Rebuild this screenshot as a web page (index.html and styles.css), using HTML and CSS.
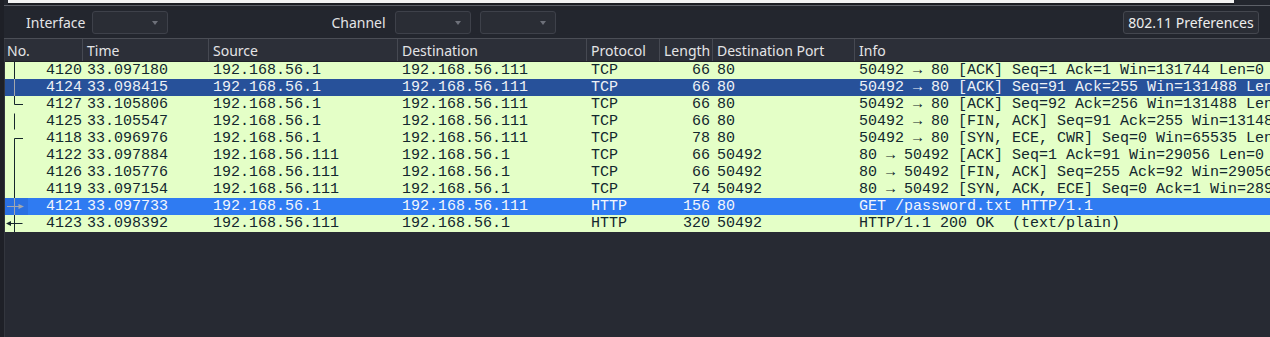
FILE: index.html
```html
<!DOCTYPE html>
<html lang="en">
<head>
    <meta charset="UTF-8">
    <title>Packet List</title>
    <link rel="stylesheet" href="styles.css">
</head>
<body>
    <div class="filter-edge"></div>

    <div class="toolbar">
        <span class="tool-label">Interface</span>
        <div class="combo"><span class="caret"></span></div>
        <span class="tool-label channel">Channel</span>
        <div class="combo"><span class="caret"></span></div>
        <div class="combo second"><span class="caret"></span></div>
        <button class="pref-btn">802.11 Preferences</button>
    </div>

    <div class="packet-list">
        <div class="cols header">
            <div class="hcell first">No.</div>
            <div class="hcell">Time</div>
            <div class="hcell">Source</div>
            <div class="hcell">Destination</div>
            <div class="hcell">Protocol</div>
            <div class="hcell">Length</div>
            <div class="hcell">Destination Port</div>
            <div class="hcell last">Info</div>
        </div>

        <div class="cols row">
            <div class="cell no"><svg class="rel" viewBox="0 0 23 17"><path d="M9.5 0V17"/></svg><span>4120</span></div>
            <div class="cell">33.097180</div>
            <div class="cell">192.168.56.1</div>
            <div class="cell">192.168.56.111</div>
            <div class="cell">TCP</div>
            <div class="cell num">66</div>
            <div class="cell">80</div>
            <div class="cell info">50492 → 80 [ACK] Seq=1 Ack=1 Win=131744 Len=0</div>
        </div>
        <div class="cols row selected">
            <div class="cell no"><svg class="rel" viewBox="0 0 23 17"><path d="M9.5 0V17"/></svg><span>4124</span></div>
            <div class="cell">33.098415</div>
            <div class="cell">192.168.56.1</div>
            <div class="cell">192.168.56.111</div>
            <div class="cell">TCP</div>
            <div class="cell num">66</div>
            <div class="cell">80</div>
            <div class="cell info">50492 → 80 [ACK] Seq=91 Ack=255 Win=131488 Len=0</div>
        </div>
        <div class="cols row">
            <div class="cell no"><svg class="rel" viewBox="0 0 23 17"><path d="M9.5 0V8.5H18"/></svg><span>4127</span></div>
            <div class="cell">33.105806</div>
            <div class="cell">192.168.56.1</div>
            <div class="cell">192.168.56.111</div>
            <div class="cell">TCP</div>
            <div class="cell num">66</div>
            <div class="cell">80</div>
            <div class="cell info">50492 → 80 [ACK] Seq=92 Ack=256 Win=131488 Len=0</div>
        </div>
        <div class="cols row">
            <div class="cell no"><svg class="rel" viewBox="0 0 23 17"><path d="M9.5 0.5V16.5"/></svg><span>4125</span></div>
            <div class="cell">33.105547</div>
            <div class="cell">192.168.56.1</div>
            <div class="cell">192.168.56.111</div>
            <div class="cell">TCP</div>
            <div class="cell num">66</div>
            <div class="cell">80</div>
            <div class="cell info">50492 → 80 [FIN, ACK] Seq=91 Ack=255 Win=131488 Len=0</div>
        </div>
        <div class="cols row">
            <div class="cell no"><svg class="rel" viewBox="0 0 23 17"><path d="M18 8.5H9.5V17"/></svg><span>4118</span></div>
            <div class="cell">33.096976</div>
            <div class="cell">192.168.56.1</div>
            <div class="cell">192.168.56.111</div>
            <div class="cell">TCP</div>
            <div class="cell num">78</div>
            <div class="cell">80</div>
            <div class="cell info">50492 → 80 [SYN, ECE, CWR] Seq=0 Win=65535 Len=0 MSS=1460</div>
        </div>
        <div class="cols row">
            <div class="cell no"><svg class="rel" viewBox="0 0 23 17"><path d="M9.5 0V17"/></svg><span>4122</span></div>
            <div class="cell">33.097884</div>
            <div class="cell">192.168.56.111</div>
            <div class="cell">192.168.56.1</div>
            <div class="cell">TCP</div>
            <div class="cell num">66</div>
            <div class="cell">50492</div>
            <div class="cell info">80 → 50492 [ACK] Seq=1 Ack=91 Win=29056 Len=0</div>
        </div>
        <div class="cols row">
            <div class="cell no"><svg class="rel" viewBox="0 0 23 17"><path d="M9.5 0V17"/></svg><span>4126</span></div>
            <div class="cell">33.105776</div>
            <div class="cell">192.168.56.111</div>
            <div class="cell">192.168.56.1</div>
            <div class="cell">TCP</div>
            <div class="cell num">66</div>
            <div class="cell">50492</div>
            <div class="cell info">80 → 50492 [FIN, ACK] Seq=255 Ack=92 Win=29056 Len=0</div>
        </div>
        <div class="cols row">
            <div class="cell no"><svg class="rel" viewBox="0 0 23 17"><path d="M9.5 0V17"/></svg><span>4119</span></div>
            <div class="cell">33.097154</div>
            <div class="cell">192.168.56.111</div>
            <div class="cell">192.168.56.1</div>
            <div class="cell">TCP</div>
            <div class="cell num">74</div>
            <div class="cell">50492</div>
            <div class="cell info">80 → 50492 [SYN, ACK, ECE] Seq=0 Ack=1 Win=28960 Len=0</div>
        </div>
        <div class="cols row current">
            <div class="cell no"><svg class="rel" viewBox="0 0 23 17"><path d="M9.5 0V17M2 8.5H14"/><path class="head" d="M19 8.5L13.5 6V11Z"/></svg><span>4121</span></div>
            <div class="cell">33.097733</div>
            <div class="cell">192.168.56.1</div>
            <div class="cell">192.168.56.111</div>
            <div class="cell">HTTP</div>
            <div class="cell num">156</div>
            <div class="cell">80</div>
            <div class="cell info">GET /password.txt HTTP/1.1</div>
        </div>
        <div class="cols row">
            <div class="cell no"><svg class="rel" viewBox="0 0 23 17"><path d="M9.5 0V17M5 8.5H17.5"/><path class="head" d="M1 8.5L6 6V11Z"/></svg><span>4123</span></div>
            <div class="cell">33.098392</div>
            <div class="cell">192.168.56.111</div>
            <div class="cell">192.168.56.1</div>
            <div class="cell">HTTP</div>
            <div class="cell num">320</div>
            <div class="cell">50492</div>
            <div class="cell info">HTTP/1.1 200 OK  (text/plain)</div>
        </div>
    </div>
</body>
</html>
```

FILE: styles.css
```css
/* Dark Qt-style window around a Wireshark packet list */
body {
    margin: 0;
    height: 337px;
    overflow: hidden;
    background: #23262e;
    font-family: 'Noto Sans', sans-serif;
    font-size: 14px;
    color: #e4e4e6;
    border-left: 4px solid #1e2027;
}

.filter-edge {
    margin-left: 4px;
    width: 1226px;
    height: 3px;
    background: #f3f3f3;
    border-bottom: 2px solid #1b1d23;
}

.toolbar {
    display: flex;
    align-items: center;
    height: 32px;
    margin-left: -4px;
    padding-left: 26px;
    padding-right: 11px;
    border-top: 1px solid #5d6068;
    border-bottom: 1px solid #4b4e56;
}

.tool-label {
    margin-right: 7px;
}

.tool-label.channel {
    margin-left: 163px;
    margin-right: 9px;
}

.combo {
    position: relative;
    width: 74px;
    height: 21px;
    background: #2a2d35;
    border: 1px solid #3e414a;
    border-radius: 3px;
}

.combo.second {
    margin-left: 9px;
}

.caret {
    position: absolute;
    right: 9px;
    top: 9px;
    border-left: 3.5px solid transparent;
    border-right: 3.5px solid transparent;
    border-top: 4px solid #6e717a;
}

.pref-btn {
    margin-left: auto;
    height: 23px;
    width: 136px;
    padding: 0;
    background: #2a2d35;
    border: 1px solid #44474f;
    border-radius: 3px;
    color: #eeeeee;
    font-family: 'Noto Sans', sans-serif;
    font-size: 14px;
}

.packet-list {
    background: #272a33;
    height: 300px;
    border-left: 1px solid #33363e;
}

.cols {
    display: grid;
    grid-template-columns: 78px 126px 189px 189px 73px 53px 142px 1fr;
}

.header {
    height: 22px;
    background: #2c2f38;
    border-bottom: 1px solid #1f2128;
}

.hcell {
    padding-left: 4px;
    padding-top: 1px;
    line-height: 21px;
    border-right: 1px solid #464952;
    white-space: nowrap;
    overflow: hidden;
}

.hcell.first {
    padding-left: 2px;
}

.hcell.last {
    border-right: none;
}

.row {
    height: 17px;
    background: #e4ffc7;
    color: #12272e;
    font-family: 'Liberation Mono', monospace;
    font-size: 15px;
    line-height: 17px;
}

.row.selected {
    background: #27519a;
    color: #eef1f6;
}

.row.current {
    background: #2f7bf2;
    color: #f3f6fc;
}

.cell {
    padding-left: 4px;
    white-space: pre;
    overflow: hidden;
}

.cell.num {
    padding-left: 0;
    padding-right: 3px;
    text-align: right;
}

.cell.no {
    display: flex;
    padding-left: 0;
    padding-right: 1px;
}

.cell.no span {
    flex: 1;
    text-align: right;
}

.rel {
    width: 23px;
    height: 17px;
    flex: none;
    fill: none;
    stroke: #15262c;
    stroke-width: 1;
}

.rel .head {
    fill: #15262c;
    stroke: none;
}

.selected .rel,
.current .rel {
    stroke: #a3a7ad;
}

.current .rel {
    background: #2a70e2;
}

.current .rel .head {
    fill: #a3a7ad;
}
```
